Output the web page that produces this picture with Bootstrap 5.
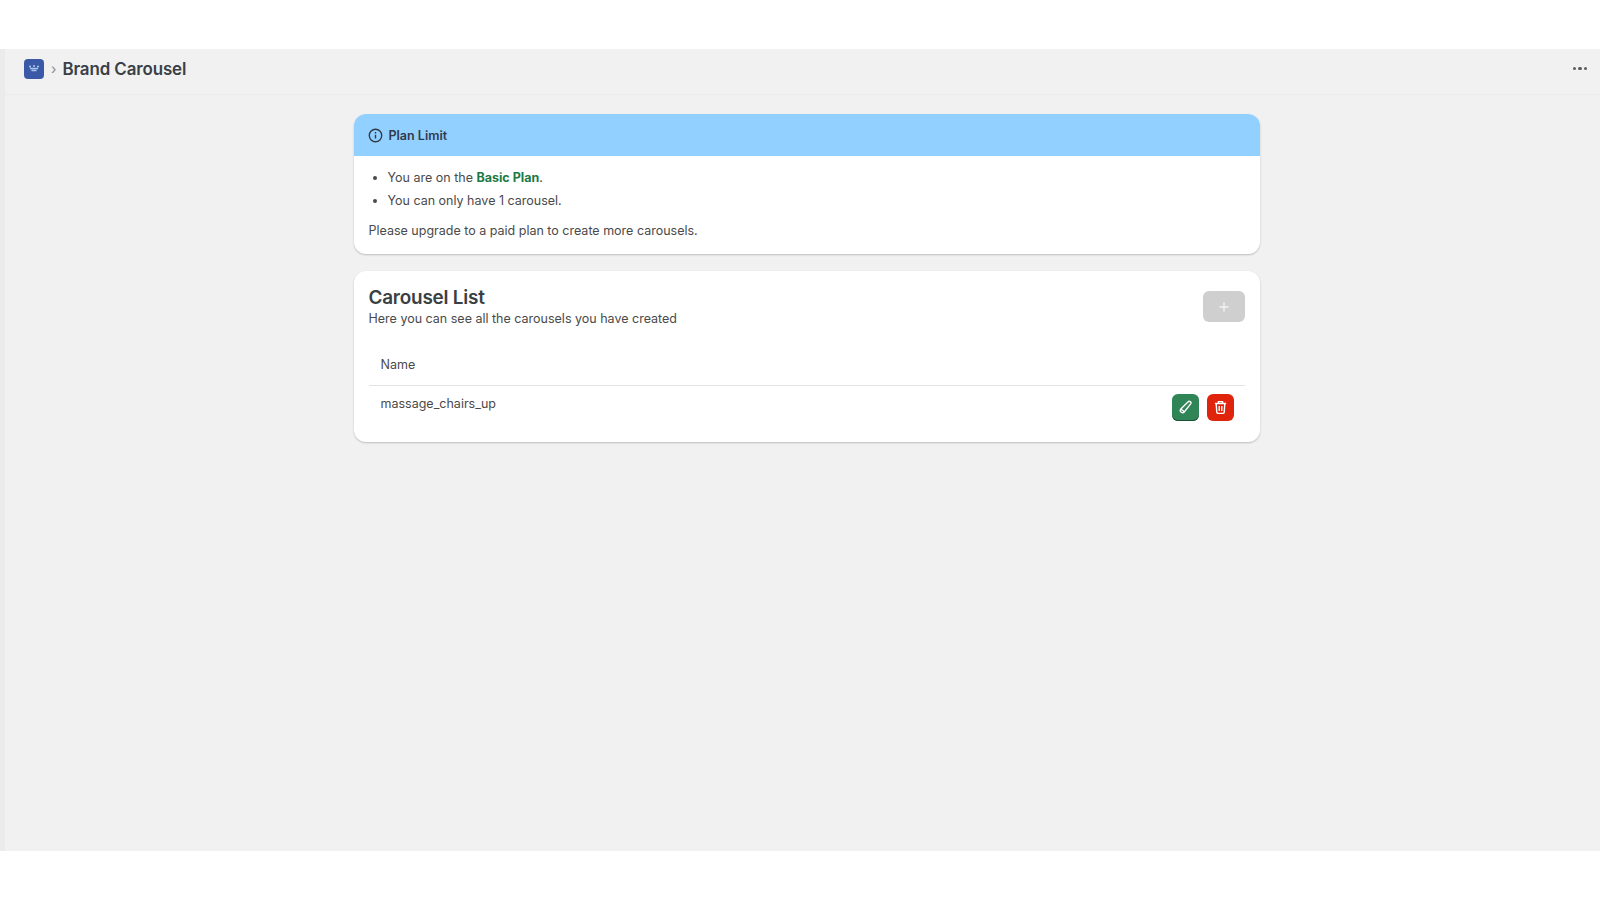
<!DOCTYPE html>
<html lang="en">
<head>
<meta charset="utf-8">
<title>Brand Carousel</title>
<link href="https://cdn.jsdelivr.net/npm/bootstrap@5.3.0/dist/css/bootstrap.min.css" rel="stylesheet">
<style>
html,body{height:100%;}
body{background:#fff;font-family:Inter,"Liberation Sans",sans-serif;color:#303030;font-size:12.5px;line-height:20px;}
.stage{padding-top:49px;height:900px;}
.shell{height:802px;background:#f1f1f1;border-left:5px solid #ebebeb;}
.topbar{height:46px;padding:0 13px 6px 19px;border-bottom:1px solid #ebebeb;}
.logo-box{width:20px;height:20px;border-radius:4px;background:#3a5aa8;}
.crumb-sep{color:#8a8a8a;font-size:14px;margin:0 6px 0 7px;line-height:1;}
.page-name{font-size:16.9px;font-weight:600;color:#3a3f47;line-height:24px;margin:0;letter-spacing:-.1px;}
.dots{gap:2px;}
.dots i{display:block;width:3.5px;height:3.5px;border-radius:50%;background:#5c5c5c;}
.column{width:906px;margin-left:348.500px;padding-top:19px;}
.panel{background:#fff;border-radius:12px;box-shadow:0 1px 2px rgba(0,0,0,.22);overflow:hidden;color:#4a4a4a;}
.panel-head{height:42px;background:#91d0ff;padding:0 14px;gap:6px;color:#303a4b;font-weight:600;}
.panel-head span{padding-top:1px;}
.panel-body-a{padding:12px 15px 13px;}
.panel-body-a ul{margin:0 0 10px;padding-left:19px;}
.panel-body-a li{margin-bottom:3px;}
.panel-body-a p{margin:0;}
.plan-tag{color:#1c7a45;font-weight:700;}
.panel-two{margin-top:17px;height:171px;padding:16px 15px 0;}
.list-title{font-size:18.900px;line-height:22px;font-weight:600;color:#3a3f44;margin:0;letter-spacing:-.2px;}
.list-sub{margin:0;line-height:20px;}
.add-btn{width:42px;height:31px;border-radius:6px;background:#cfcfcf;margin-top:4px;}
.rows{margin-top:17px;}
.rows-head{height:40px;padding:0 12px;border-bottom:1px solid #e3e3e3;line-height:38px;}
.rows-item{padding:0 11px 0 12px;height:43px;}
.rows-item span{margin-top:8px;}
.act{width:27px;height:27px;border:0;padding:0;border-radius:6px;margin-top:7.500px;}
.act-edit{background:#2f8555;box-shadow:inset 0 -1px 0 #1c4f33;}
.act-del{background:#e0240c;}
</style>
</head>
<body>
<div class="stage">
  <div class="shell">
    <header class="topbar d-flex align-items-center justify-content-between">
      <div class="d-flex align-items-center">
        <div class="logo-box d-flex align-items-center justify-content-center">
          <svg width="12" height="10" viewBox="0 0 12 10"><path d="M1 2.500h2M5 2h2M9 2.500h2M2 4.500h8M3.500 6.500h5" stroke="#a9c6ea" stroke-width="1.500" fill="none"/></svg>
        </div>
        <span class="crumb-sep">›</span>
        <h1 class="page-name">Brand Carousel</h1>
      </div>
      <div class="dots d-flex"><i></i><i></i><i></i></div>
    </header>
    <main class="column">
      <section class="panel">
        <div class="panel-head d-flex align-items-center">
          <svg width="15" height="15" viewBox="0 0 15 15" fill="none" stroke="#303a4b" stroke-width="1.400"><circle cx="7.500" cy="7.500" r="6.200"/><path d="M7.500 6.800v3.800M7.500 4v1.400"/></svg>
          <span>Plan Limit</span>
        </div>
        <div class="panel-body-a">
          <ul>
            <li>You are on the <span class="plan-tag">Basic Plan</span>.</li>
            <li>You can only have 1 carousel.</li>
          </ul>
          <p>Please upgrade to a paid plan to create more carousels.</p>
        </div>
      </section>
      <section class="panel panel-two">
        <div class="d-flex justify-content-between align-items-start">
          <div>
            <h2 class="list-title">Carousel List</h2>
            <p class="list-sub">Here you can see all the carousels you have created</p>
          </div>
          <div class="add-btn d-flex align-items-center justify-content-center">
            <svg width="10" height="10" viewBox="0 0 10 10"><path d="M5 .5v9M.5 5h9" stroke="#f3f3f3" stroke-width="1.400"/></svg>
          </div>
        </div>
        <div class="rows">
          <div class="rows-head">Name</div>
          <div class="rows-item d-flex justify-content-between align-items-start">
            <span>massage_chairs_up</span>
            <div class="d-flex gap-2">
              <button class="act act-edit d-flex align-items-center justify-content-center" type="button" aria-label="Edit">
                <svg width="15" height="15" viewBox="0 0 14 14" fill="none" stroke="#fff" stroke-width="1.300" stroke-linejoin="round"><path d="M9.300 1.900a1.500 1.500 0 0 1 2.500 1.700L6 11a2.100 2.100 0 0 1-3.400-2.500z"/><path d="M3 8.600l2.900 2.300"/></svg>
              </button>
              <button class="act act-del d-flex align-items-center justify-content-center" type="button" aria-label="Delete">
                <svg width="15" height="15" viewBox="0 0 14 14" fill="none" stroke="#fff" stroke-width="1.300" stroke-linejoin="round"><path d="M1.800 3.300h10.400M5 3.300V1.500h4v1.800M3 3.300l.5 8a1.400 1.400 0 0 0 1.400 1.200h4.200a1.400 1.400 0 0 0 1.400-1.200l.5-8M5.800 5.500v4.800M8.200 5.500v4.800"/></svg>
              </button>
            </div>
          </div>
        </div>
      </section>
    </main>
  </div>
</div>
<script src="https://cdn.jsdelivr.net/npm/bootstrap@5.3.0/dist/js/bootstrap.bundle.min.js"></script>
</body>
</html>
